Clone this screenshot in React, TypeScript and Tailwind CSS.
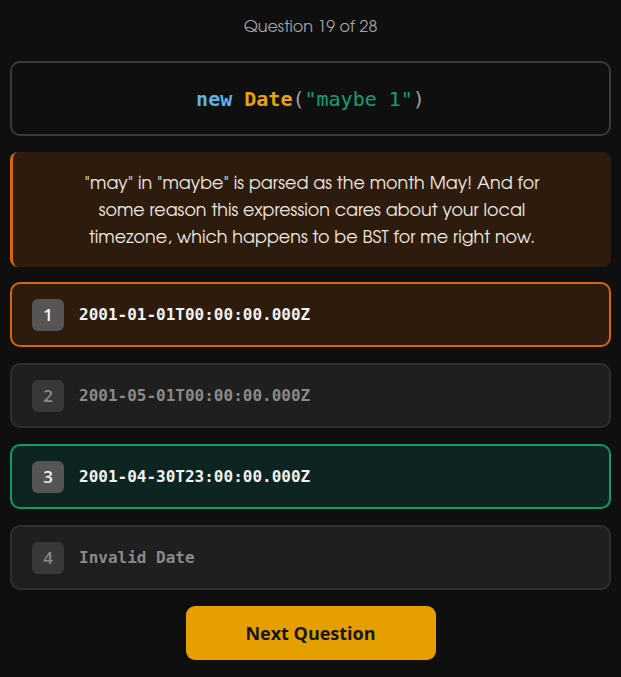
import React from 'react';

const sans = "font-['URW_Gothic','Century_Gothic','TeX_Gyre_Adventor',Lato,sans-serif]";
const mono = "font-['DejaVu_Sans_Mono',monospace]";

type Option = { n: number; text: string; state: 'picked' | 'plain' | 'correct' };

const options: Option[] = [
  { n: 1, text: '2001-01-01T00:00:00.000Z', state: 'picked' },
  { n: 2, text: '2001-05-01T00:00:00.000Z', state: 'plain' },
  { n: 3, text: '2001-04-30T23:00:00.000Z', state: 'correct' },
  { n: 4, text: 'Invalid Date', state: 'plain' },
];

const boxStyles = {
  picked: 'border-[#d9650b] bg-[#2d1b0e] text-[#f2f2f2]',
  plain: 'border-[#2e2e2e] bg-[#1f1f1f] text-[#8a8a8a]',
  correct: 'border-[#0f9a6e] bg-[#0e2420] text-[#f2f2f2]',
};

const badgeStyles = {
  picked: 'bg-[#555555] text-[#f2f2f2]',
  plain: 'bg-[#383838] text-[#8a8a8a]',
  correct: 'bg-[#555555] text-[#f2f2f2]',
};

export default function App() {
  return (
    <div className={`min-h-screen bg-[#0f0f0f] px-[10px] pt-[16px] ${sans}`}>
      <div className="text-center text-[16px] leading-6 text-[#a3a3a3]">Question 19 of 28</div>

      <div className={`mt-[21px] flex h-[75px] items-center justify-center rounded-[10px] border-2 border-[#3a3a3a] text-[20px] ${mono}`}>
        <span className="font-bold text-[#5bb3e6]">new</span>
        <span>&nbsp;</span>
        <span className="font-bold text-[#e8a30f]">Date</span>
        <span className="text-[#a0a0a0]">(</span>
        <span className="text-[#10a075]">"maybe 1"</span>
        <span className="text-[#a0a0a0]">)</span>
      </div>

      <div className="mt-[16px] rounded-lg border-l-[3px] border-[#d9650b] bg-[#2d1b0e] px-[60px] pb-[15px] pt-[19px] text-center text-[17.5px] leading-[27px] text-[#ece6df]">
        "may" in "maybe" is parsed as the month May! And for some reason this expression cares about your local timezone, which happens to be BST for me right now.
      </div>

      <div className="mt-[15px] flex flex-col gap-4">
        {options.map((o) => (
          <div
            key={o.n}
            className={`flex h-[65px] items-center gap-[15px] rounded-[10px] border-2 px-5 ${boxStyles[o.state]}`}
          >
            <div className={`flex h-8 w-8 items-center justify-center rounded-md font-['Open_Sans',sans-serif] text-[17px] font-semibold ${badgeStyles[o.state]}`}>
              {o.n}
            </div>
            <span className={`text-[16px] font-bold ${mono}`}>{o.text}</span>
          </div>
        ))}
      </div>

      <div className="mt-[16px] flex justify-center">
        <button className="h-[54px] w-[250px] rounded-[9px] bg-[#e5a000] font-['Open_Sans',sans-serif] text-[18px] font-bold text-[#161616]">
          Next Question
        </button>
      </div>
    </div>
  );
}
